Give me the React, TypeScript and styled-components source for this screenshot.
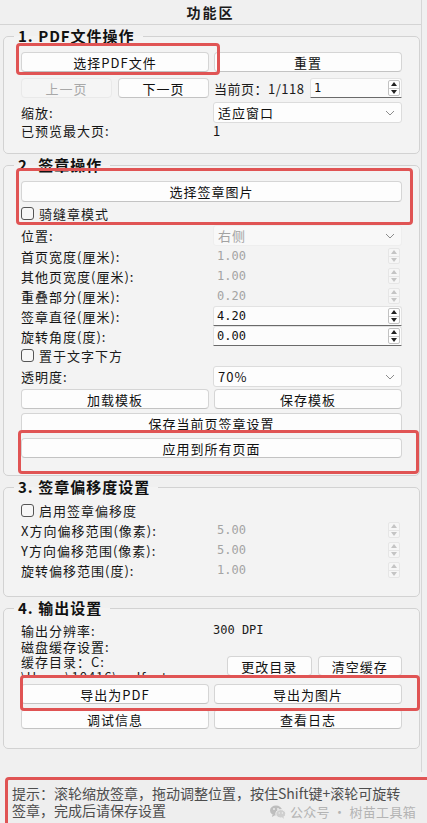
import React from "react";
import styled, { createGlobalStyle, css } from "styled-components";

const GlobalStyle = createGlobalStyle`
  html, body { margin: 0; padding: 0; background: #f0f0f0; }
  body {
    font-family: "Noto Sans CJK SC", "Noto Sans", sans-serif;
    font-size: 13px;
    color: #1b1b1b;
  }
  * { box-sizing: border-box; }
`;

const Chevron = () => (
  <svg width="10" height="6" viewBox="0 0 10 6">
    <path d="M1 1l4 4 4-4" fill="none" stroke="#8c8c8c" strokeWidth="1" />
  </svg>
);

const WeChat = () => (
  <svg width="16" height="14" viewBox="0 0 16 14">
    <ellipse cx="6" cy="5.5" rx="6" ry="5" fill="#bdbdbd" />
    <path d="M2.5 9.5 L2 12 L5 10.3 Z" fill="#bdbdbd" />
    <ellipse cx="10.8" cy="8.8" rx="5" ry="4.2" fill="#cfcfcf" stroke="#f0f0f0" strokeWidth="1" />
    <path d="M13.5 12 L14.2 13.8 L11.8 12.6 Z" fill="#cfcfcf" />
    <circle cx="4" cy="4" r="0.9" fill="#f0f0f0" />
    <circle cx="8" cy="4" r="0.9" fill="#f0f0f0" />
    <circle cx="9.2" cy="8" r="0.7" fill="#f0f0f0" />
    <circle cx="12.4" cy="8" r="0.7" fill="#f0f0f0" />
  </svg>
);

const Spin = ({ value, disabled }: { value: string; disabled?: boolean }) => (
  <SpinBox $disabled={disabled}>
    <SpinValue>{value}</SpinValue>
    <Arrows $disabled={disabled}>
      <ArrowHalf $disabled={disabled} />
      <ArrowHalf $disabled={disabled} $down />
    </Arrows>
  </SpinBox>
);

const Combo = ({ value, disabled }: { value: string; disabled?: boolean }) => (
  <ComboBox $disabled={disabled}>
    <span>{value}</span>
    <Chevron />
  </ComboBox>
);

const Check = ({ label, mt }: { label: string; mt?: number }) => (
  <CheckRow $mt={mt}>
    <CheckMark />
    <span>{label}</span>
  </CheckRow>
);

export default function App() {
  return (
    <>
      <GlobalStyle />
      <Page>
        <Panel>
          <Header>功能区</Header>
          <Groups>
            <Group $pt={7} $pb={15}>
              <Legend>1. PDF文件操作</Legend>
              <Pair>
                <Highlight $inset="-9px -11px -3px -5px">
                  <Button>选择PDF文件</Button>
                </Highlight>
                <Button>重置</Button>
              </Pair>
              <Pair $mt={6}>
                <NavButtons>
                  <Button disabled>上一页</Button>
                  <Button>下一页</Button>
                </NavButtons>
                <PageInfo>
                  <span>当前页：1/118</span>
                  <SpinSlot>
                    <Spin value="1" />
                  </SpinSlot>
                </PageInfo>
              </Pair>
              <FieldRow $mt={4} $h={19}>
                <Label>缩放:</Label>
                <Combo value="适应窗口" />
              </FieldRow>
              <FieldRow $mt={1} $h={16}>
                <Label>已预览最大页:</Label>
                <Label>1</Label>
              </FieldRow>
            </Group>

            <Group $pt={7} $pb={17}>
              <Legend>2. 签章操作</Legend>
              <Highlight $inset="-13px -11px -3px -5px">
                <Button $h={21}>选择签章图片</Button>
                <Check label="骑缝章模式" mt={2} />
              </Highlight>
              <FieldRow $mt={3} $h={18}>
                <Label>位置:</Label>
                <Combo value="右侧" disabled />
              </FieldRow>
              <FieldRow $mt={3}>
                <Label>首页宽度(厘米):</Label>
                <Spin value="1.00" disabled />
              </FieldRow>
              <FieldRow>
                <Label>其他页宽度(厘米):</Label>
                <Spin value="1.00" disabled />
              </FieldRow>
              <FieldRow>
                <Label>重叠部分(厘米):</Label>
                <Spin value="0.20" disabled />
              </FieldRow>
              <FieldRow>
                <Label>签章直径(厘米):</Label>
                <Spin value="4.20" />
              </FieldRow>
              <FieldRow>
                <Label>旋转角度(度):</Label>
                <Spin value="0.00" />
              </FieldRow>
              <Check label="置于文字下方" />
              <FieldRow $mt={2} $h={19}>
                <Label>透明度:</Label>
                <Combo value="70%" />
              </FieldRow>
              <Pair $mt={4}>
                <Button>加载模板</Button>
                <Button>保存模板</Button>
              </Pair>
              <Button $mt={4}>保存当前页签章设置</Button>
              <Highlight $inset="-8px -17px -16px -3px" $mt={5}>
                <Button>应用到所有页面</Button>
              </Highlight>
            </Group>

            <Group $pt={5} $pb={16}>
              <Legend>3. 签章偏移度设置</Legend>
              <Check label="启用签章偏移度" />
              <FieldRow $mt={1}>
                <Label>X方向偏移范围(像素):</Label>
                <Spin value="5.00" disabled />
              </FieldRow>
              <FieldRow>
                <Label>Y方向偏移范围(像素):</Label>
                <Spin value="5.00" disabled />
              </FieldRow>
              <FieldRow>
                <Label>旋转偏移范围(度):</Label>
                <Spin value="1.00" disabled />
              </FieldRow>
            </Group>

            <Group $pt={5} $pb={19}>
              <Legend>4. 输出设置</Legend>
              <FieldRow $h={16}>
                <Label>输出分辨率:</Label>
                <Mono>300 DPI</Mono>
              </FieldRow>
              <FieldRow $h={16}>
                <Label>磁盘缓存设置:</Label>
              </FieldRow>
              <CacheRow>
                <CachePath>
                  缓存目录：C:
                  <br />
                  \Users\10416\.pdf_stamp_cache
                </CachePath>
                <CacheButtons>
                  <Button>更改目录</Button>
                  <Button>清空缓存</Button>
                </CacheButtons>
              </CacheRow>
              <Highlight $inset="-9px -18px -7px -1px" $mt={8}>
                <Pair>
                  <Button>导出为PDF</Button>
                  <Button>导出为图片</Button>
                </Pair>
              </Highlight>
              <Pair $mt={5}>
                <Button>调试信息</Button>
                <Button>查看日志</Button>
              </Pair>
            </Group>
          </Groups>
        </Panel>
        <Hint>
          提示：滚轮缩放签章，拖动调整位置，按住Shift键+滚轮可旋转
          <br />
          签章，完成后请保存设置
          <Watermark>
            <WeChat />
            <span>公众号 · 树苗工具箱</span>
          </Watermark>
        </Hint>
      </Page>
    </>
  );
}

const Page = styled.div`
  width: 427px;
  height: 823px;
  overflow: hidden;
  display: flex;
  flex-direction: column;
`;

const Panel = styled.div`
  width: 422px;
  height: 772px;
  border-right: 1px solid #d6d6d6;
  display: flex;
  flex-direction: column;
`;

const Header = styled.div`
  height: 25px;
  line-height: 24px;
  border-bottom: 1px solid #d4d4d4;
  text-align: center;
  font-size: 14px;
  font-weight: 700;
  letter-spacing: 2px;
`;

const Groups = styled.div`
  display: flex;
  flex-direction: column;
  gap: 2px;
  padding: 2px 1px 0 3px;
`;

const Group = styled.fieldset<{ $pt: number; $pb: number }>`
  margin: 0;
  min-width: 0;
  padding: ${(p) => p.$pt}px 17px ${(p) => p.$pb}px 17px;
  border: 1px solid #d2d2d2;
  border-radius: 5px;
  display: flex;
  flex-direction: column;
  background: #f3f3f3;
`;

const Legend = styled.legend`
  margin-left: -7px;
  padding: 0 8px 0 4px;
  font-size: 15px;
  line-height: 18px;
  font-weight: 700;
  letter-spacing: 1px;
  color: #111;
`;

const Highlight = styled.div<{ $inset: string; $mt?: number }>`
  position: relative;
  margin-top: ${(p) => p.$mt ?? 0}px;
  display: flex;
  flex-direction: column;

  &::after {
    content: "";
    position: absolute;
    inset: ${(p) => p.$inset};
    border: 3px solid #e05454;
    border-radius: 4px;
    pointer-events: none;
  }
`;

const Pair = styled.div<{ $mt?: number }>`
  display: grid;
  grid-template-columns: 188px 1fr;
  column-gap: 5px;
  margin-top: ${(p) => p.$mt ?? 0}px;
`;

const NavButtons = styled.div`
  display: grid;
  grid-template-columns: 1fr 1fr;
  column-gap: 6px;
`;

const PageInfo = styled.div`
  display: flex;
  align-items: center;
  justify-content: space-between;
  letter-spacing: 0.5px;
`;

const SpinSlot = styled.div`
  width: 92px;
`;

const Button = styled.button<{ $h?: number; $mt?: number }>`
  width: 100%;
  height: ${(p) => p.$h ?? 20}px;
  margin: ${(p) => p.$mt ?? 0}px 0 0;
  padding: 0;
  font: inherit;
  letter-spacing: 1px;
  line-height: 1;
  color: #111;
  background: #fdfdfd;
  border: 1px solid #d5d5d5;
  border-bottom-color: #c3c3c3;
  border-radius: 4px;
  display: flex;
  align-items: center;
  justify-content: center;

  &:disabled {
    color: #a8a8a8;
    background: #f5f5f5;
    border-color: #e9e9e9;
  }
`;

const FieldRow = styled.div<{ $mt?: number; $h?: number }>`
  display: grid;
  grid-template-columns: 192px 1fr;
  align-items: center;
  height: ${(p) => p.$h ?? 20}px;
  margin-top: ${(p) => p.$mt ?? 0}px;
`;

const Label = styled.span`
  letter-spacing: 1px;
  line-height: 15px;
  white-space: nowrap;
  color: #151515;
`;

const Mono = styled.span`
  font-family: "DejaVu Sans Mono", monospace;
  font-size: 12px;
  line-height: 15px;
`;

const SpinBox = styled.div<{ $disabled?: boolean }>`
  height: 20px;
  display: flex;
  align-items: center;
  justify-content: space-between;
  padding: 0 1px 0 3px;
  border: 1px solid transparent;
  color: #a4a4a4;
  ${(p) =>
    !p.$disabled &&
    css`
      color: #111;
      background: #fcfcfc;
      border-color: #e2e2e2;
      border-bottom-color: #6a6a6a;
      border-radius: 3px 3px 0 0;
    `}
`;

const SpinValue = styled.span`
  font-family: "DejaVu Sans Mono", monospace;
  font-size: 12px;
`;

const Arrows = styled.span<{ $disabled?: boolean }>`
  width: 12px;
  height: 16px;
  display: flex;
  flex-direction: column;
  border: 1px solid ${(p) => (p.$disabled ? "#e6e6e6" : "#c2c2c2")};
  border-radius: 2px;
  background: ${(p) => (p.$disabled ? "#f6f6f6" : "#ffffff")};
`;

const ArrowHalf = styled.span<{ $down?: boolean; $disabled?: boolean }>`
  flex: 1;
  display: flex;
  align-items: center;
  justify-content: center;
  border-top: ${(p) => (p.$down ? `1px solid ${p.$disabled ? "#e6e6e6" : "#cfcfcf"}` : "none")};

  &::before {
    content: "";
    border-left: 3px solid transparent;
    border-right: 3px solid transparent;
    ${(p) =>
      p.$down
        ? css`border-top: 4px solid ${p.$disabled ? "#c4c4c4" : "#222"};`
        : css`border-bottom: 4px solid ${p.$disabled ? "#c4c4c4" : "#222"};`}
  }
`;

const ComboBox = styled.div<{ $disabled?: boolean }>`
  display: flex;
  align-items: center;
  justify-content: space-between;
  height: 100%;
  padding: 0 6px 0 4px;
  border: 1px solid ${(p) => (p.$disabled ? "#eeeeee" : "#dcdcdc")};
  border-radius: 3px;
  background: ${(p) => (p.$disabled ? "#f8f8f8" : "#fdfdfd")};
  color: ${(p) => (p.$disabled ? "#a2a2a2" : "#111")};
  letter-spacing: 1px;
`;

const CheckRow = styled.label<{ $mt?: number }>`
  display: flex;
  align-items: center;
  gap: 5px;
  height: 18px;
  margin-top: ${(p) => p.$mt ?? 0}px;
  letter-spacing: 1px;
`;

const CheckMark = styled.span`
  width: 13px;
  height: 13px;
  border: 1px solid #555;
  border-radius: 3px;
  background: #f7f7f7;
`;

const CacheRow = styled.div`
  display: grid;
  grid-template-columns: 201px 1fr;
  column-gap: 5px;
  align-items: end;
  height: 22px;
`;

const CachePath = styled.div`
  height: 22px;
  overflow: hidden;
  line-height: 15px;
  letter-spacing: 1px;
  white-space: nowrap;
`;

const CacheButtons = styled.div`
  display: grid;
  grid-template-columns: 1fr 1fr;
  column-gap: 6px;
`;

const Hint = styled.div`
  position: relative;
  margin: 5px 0 0 5px;
  flex: 1;
  padding: 5px 4px 0;
  border: 3px solid #e05454;
  border-right: none;
  border-bottom: none;
  border-radius: 4px 0 0 0;
  background: #eeeeee;
  color: #4d4d4d;
  font-size: 14px;
  line-height: 17px;
  letter-spacing: 0;
  white-space: nowrap;
`;

const Watermark = styled.div`
  position: absolute;
  right: 11px;
  top: 23px;
  display: flex;
  align-items: center;
  gap: 4px;
  color: #b4b4b4;
  font-size: 13px;
  letter-spacing: 0.3px;
`;
